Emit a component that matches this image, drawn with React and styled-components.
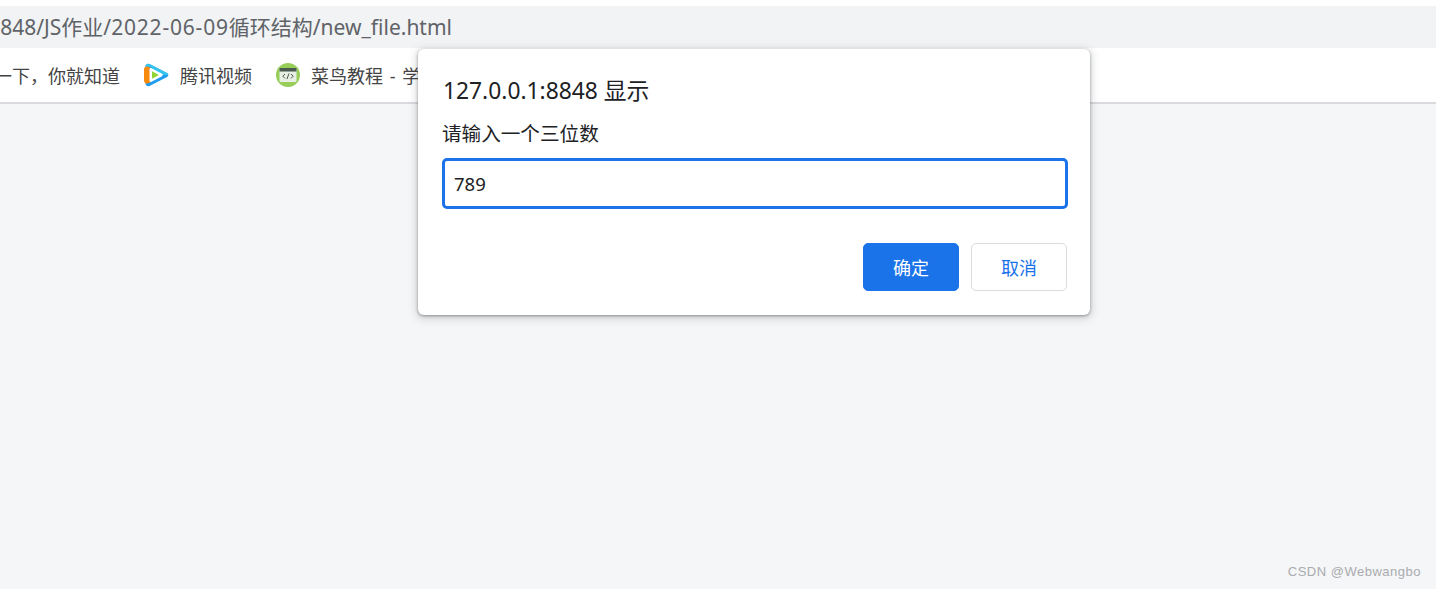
import React from "react";
import styled, { createGlobalStyle } from "styled-components";

const Global = createGlobalStyle`
  html, body { margin: 0; padding: 0; height: 100%; background: #f5f6f8; overflow: hidden; }
  #root { height: 100%; }
  * { box-sizing: border-box; }
`;
const FONT = `"Noto Sans", "Noto Sans CJK SC", sans-serif`;

const Page = styled.div`
  position: relative; height: 589px; display: flex; flex-direction: column;
  font-family: ${FONT}; background: #f5f6f8;
`;
const TopStrip = styled.div`height: 6px; background: #fff;`;
const AddressBar = styled.div`
  height: 42px; background: #f1f3f4; display: flex; align-items: center; overflow: hidden;
`;
const ClippedLeft = styled.div`
  width: ${p => p.$w}px; flex: none; display: flex; justify-content: flex-end; overflow: hidden; white-space: nowrap;
`;
const Url = styled.span`font-size: 21px; line-height: 28px; color: #5f6368;`;
const UrlDate = styled.span`letter-spacing: .8px;`;
const Bookmarks = styled.div`
  height: 56px; background: #fff; border-bottom: 2px solid #d8dade;
  display: flex; align-items: center; padding-bottom: 1px; overflow: hidden;
`;
const Mark = styled.span`font-size: 18px; color: #444; white-space: nowrap; word-spacing: ${p => p.$ws || 0}px;`;
const Item = styled.div`
  display: flex; align-items: center; gap: 11px; margin-left: ${p => p.$ml}px; flex: none;
`;
const Dialog = styled.div`
  position: absolute; left: 418px; top: 49px; width: 672px; height: 266px;
  background: #fff; border-radius: 6px; padding: 25px 24px 24px 25px;
  box-shadow: 0 1px 3px rgba(60,64,67,.5), 0 2px 8px 2px rgba(60,64,67,.18);
  display: flex; flex-direction: column;
`;
const Title = styled.div`font-size: 22.8px; line-height: 34px; color: #202124; white-space: nowrap;`;
const Msg = styled.div`font-size: 19.6px; line-height: 28px; color: #202124; margin: 12px 0 0 -1px;`;
const Field = styled.div`
  margin-top: 10px; margin-left: -1px; width: 626px; height: 51px; border: 3px solid #1a73e8; border-radius: 5px;
  display: flex; align-items: center; padding-left: 9px; font-size: 18.5px; color: #202124;
`;
const Actions = styled.div`
  margin-top: 34px; margin-right: -1px; display: flex; justify-content: flex-end; gap: 12px;
`;
const Button = styled.div`
  width: 96px; height: 48px; border-radius: 5px; display: flex; align-items: center; justify-content: center;
  font-size: 18px;
  background: ${p => p.$primary ? "#1a73e8" : "#fff"};
  color: ${p => p.$primary ? "#fff" : "#1a73e8"};
  border: 1px solid ${p => p.$primary ? "#1a73e8" : "#dadce0"};
`;
const Watermark = styled.div`
  position: absolute; right: 15px; top: 563px; font-family: "Liberation Sans", sans-serif;
  font-size: 13px; line-height: 18px; color: #a9abae; letter-spacing: .5px;
`;

const VideoIcon = () => (
  <svg width="26" height="24" viewBox="0 0 26 24">
    <path d="M2.500 3.500C2.500 1 5 0 7 1.200L24 10c1.800 1 1.800 3 0 4L7 22.800C5 24 2.500 23 2.500 20.500z" fill="#1e9cf0" />
    <path d="M2.500 3.500C2.500 1 5 0 7 1.200L24 10c1 .6 1.400 1.300 1.400 2H8V4z" fill="#35c4ee" />
    <path d="M1 6.500C1 4 3 3 4.500 3.600L8 5v14l-3.500 1.500C3 21 1 20 1 17.500z" fill="#f7890f" />
    <path d="M6.500 6.500c0-1.200 1-1.800 2-1.200l10.500 5.500c1 .6 1 1.800 0 2.400L8.500 18.700c-1 .6-2 0-2-1.200z" fill="#fff" />
    <path d="M9 8.200v7.600L15.800 12z" fill="#8fd433" />
  </svg>
);
const RunoobIcon = () => (
  <svg width="24" height="24" viewBox="0 0 24 24">
    <circle cx="12" cy="12" r="12" fill="#96ce58" />
    <rect x="3.500" y="5" width="17" height="14" rx="1" fill="#e8eee2" />
    <rect x="3.500" y="5" width="17" height="3.500" fill="#4a5a50" />
    <path d="M9 11l-2.200 2.200L9 15.400M15 11l2.200 2.200L15 15.400M13 10.500l-2 5.500" stroke="#4a5a50" strokeWidth="1" fill="none" />
  </svg>
);

export default function App() {
  return (
    <Page>
      <Global />
      <TopStrip />
      <AddressBar>
        <ClippedLeft $w={452}><Url>127.0.0.1:8848/JS作业/<UrlDate>2022-06-09</UrlDate>循环结构/new_file.html</Url></ClippedLeft>
      </AddressBar>
      <Bookmarks>
        <ClippedLeft $w={120}><Mark>百度一下，你就知道</Mark></ClippedLeft>
        <Item $ml={23}><VideoIcon /><Mark>腾讯视频</Mark></Item>
        <Item $ml={24}><RunoobIcon /><Mark $ws={2}>菜鸟教程 - 学的不仅是技术</Mark></Item>
      </Bookmarks>
      <Dialog>
        <Title>127.0.0.1:8848 显示</Title>
        <Msg>请输入一个三位数</Msg>
        <Field>789</Field>
        <Actions>
          <Button $primary>确定</Button>
          <Button>取消</Button>
        </Actions>
      </Dialog>
      <Watermark>CSDN @Webwangbo</Watermark>
    </Page>
  );
}
